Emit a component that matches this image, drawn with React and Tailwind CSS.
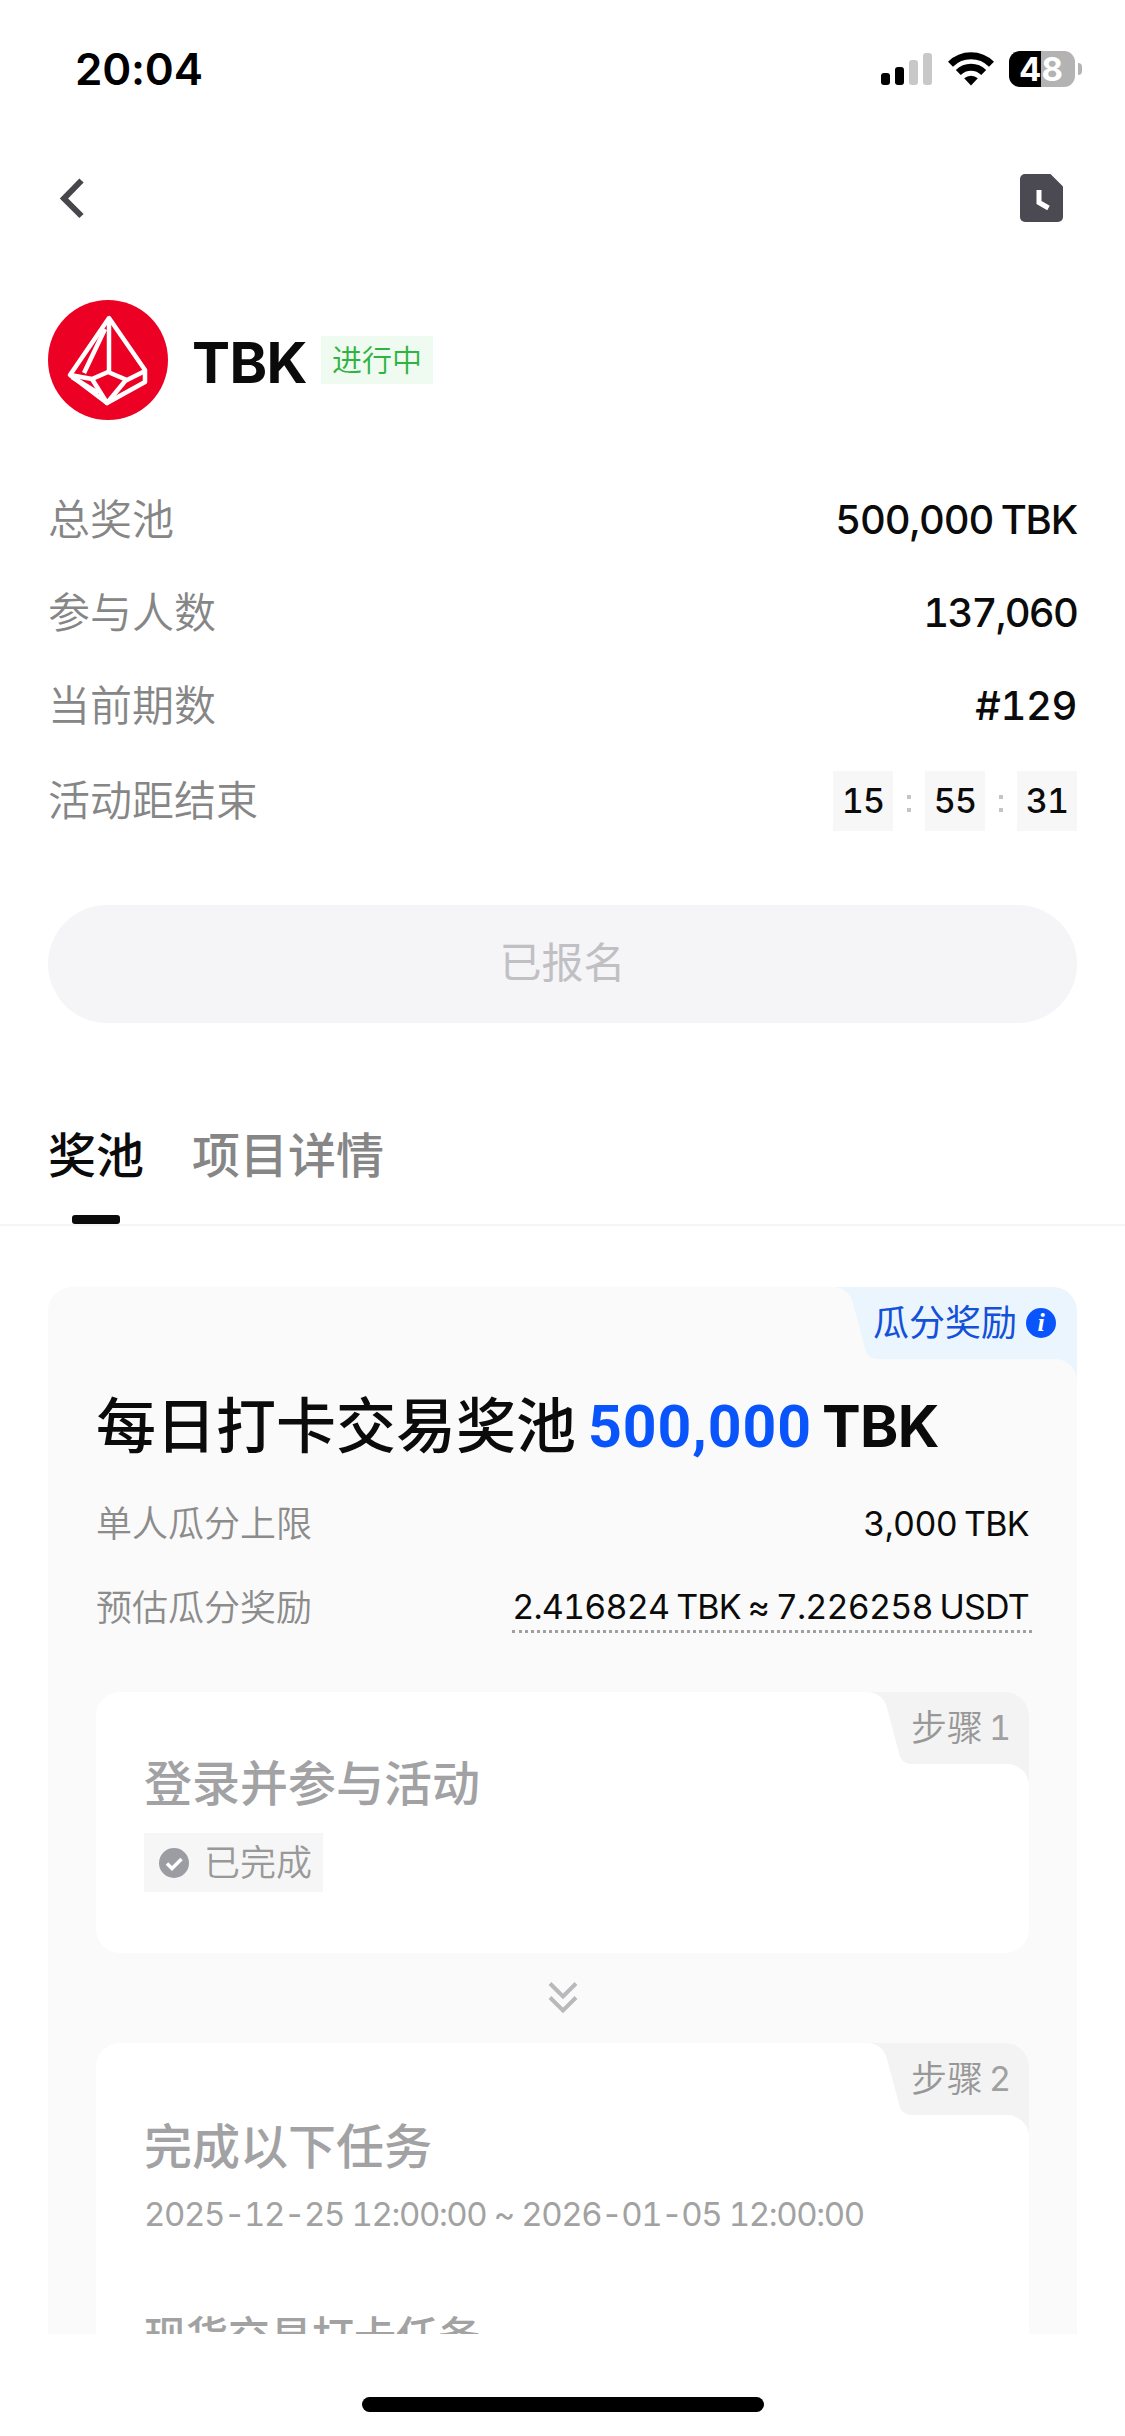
import React from "react";

// Rows shown under the token name
const infoRows = [
  { label: "总奖池", value: "500,000 TBK", spacing: "tracking-[-1.2px] [word-spacing:-2px]" },
  { label: "参与人数", value: "137,060", spacing: "tracking-[-1.8px]" },
  { label: "当前期数", value: "#129", spacing: "tracking-[-0.4px]" },
];

const countdown = ["15", "55", "31"];

// ---------------- STATUS BAR ----------------
function StatusBar() {
  return (
    <div className="flex h-[138px] items-center justify-between pl-[75px] pr-[43px] font-['Inter',sans-serif]">
      <span className="text-[44px] leading-none font-semibold text-black tracking-[-0.2px]">
        20:04
      </span>
      <div className="flex items-center gap-[15px]">
        {/* Signal */}
        <svg width="52" height="34" viewBox="0 0 52 34">
          <rect x="0" y="21" width="9" height="12" rx="3" fill="#000" />
          <rect x="14" y="15" width="9" height="18" rx="3" fill="#000" />
          <rect x="28" y="8" width="9" height="25" rx="3" fill="#c8c8c8" />
          <rect x="42" y="1" width="9" height="32" rx="3" fill="#c8c8c8" />
        </svg>
        {/* Wifi */}
        <svg width="46" height="34" viewBox="0 0 46 34">
          <g fill="none" stroke="#000" strokeWidth="7">
            <path d="M2.5 12.2a29 29 0 0 1 41 0" />
            <path d="M10.3 20.4a18 18 0 0 1 25.4 0" />
          </g>
          <path d="M23 33.5l-6.8-7.2a10 10 0 0 1 13.6 0z" fill="#000" />
        </svg>
        {/* Battery */}
        <div className="flex items-center gap-[3px]">
          <div className="flex h-9 w-[66px] items-center justify-center rounded-[11px] bg-linear-to-r from-black from-[49%] to-[#b3b3b3] to-[49%]">
            <span className="pr-[2px] text-[33px] leading-none font-bold text-white">
              48
            </span>
          </div>
          <div className="h-3 w-1 rounded-r-full bg-[#b3b3b3]" />
        </div>
      </div>
    </div>
  );
}

// ---------------- TOP NAVIGATION ----------------
function TopNav() {
  return (
    <div className="flex h-[120px] items-center justify-between pl-[56px] pr-[62px]">
      <svg width="28" height="44" viewBox="0 0 28 44" fill="none">
        <path d="M25.500 4.5L8 22.500l17.500 17.500" stroke="#47474b" strokeWidth="6" />
      </svg>
      <svg width="43" height="48" viewBox="0 0 43 48">
        <path
          d="M5 0h25.500L43 12.500V43a5 5 0 0 1-5 5H5a5 5 0 0 1-5-5V5a5 5 0 0 1 5-5z"
          fill="#4b4a53"
        />
        <path d="M19 16v12.500l9.500 5.500" fill="none" stroke="#fff" strokeWidth="5" />
      </svg>
    </div>
  );
}

// ---------------- TOKEN LOGO ----------------
function TokenLogo() {
  return (
    <svg width="120" height="120" viewBox="0 0 120 120">
      <circle cx="60" cy="60" r="60" fill="#ec0024" />
      <g fill="none" stroke="#fff" strokeWidth="4.500" strokeLinejoin="round">
        <path d="M61 18L22 75l37 28 38-21V70z" />
        <path d="M61 18v54" />
        <path d="M57 29L36 73" />
        <path d="M22 75l22 4 16-7 19 8 18-9" />
        <path d="M44 79l15 24 19-23" />
        <path d="M24 77l26 16" />
      </g>
    </svg>
  );
}

// Slanted corner label used on the cards
function CornerTab({ width, fill, children }) {
  return (
    <div className="absolute top-0 right-0 h-[92px]">
      <svg width={width} height="92" viewBox={`0 0 ${width} 92`}>
        <path
          d={`M0 0H${width - 24}a24 24 0 0 1 24 24V92a22 22 0 0 0-22-20H45c-7 0-12-4-13-11L20 16C18 7 11 0 0 0z`}
          fill={fill}
        />
      </svg>
      <div className="absolute inset-x-0 top-0 flex h-[72px] items-center">
        {children}
      </div>
    </div>
  );
}

function StepCard({ step, title, className, children }) {
  return (
    <div className={`relative rounded-[24px] bg-white px-12 ${className}`}>
      <CornerTab width={162} fill="#f3f3f3">
        <span className="ml-[44px] text-[36px] leading-none font-[350] text-[#989898]">
          步骤
        </span>
        <span className="ml-[6px] text-[34px] leading-none tabular-nums text-[#a0a0a0]">
          {step}
        </span>
      </CornerTab>
      <h3 className="text-[48px] leading-[60px] font-medium text-[#a2a2a4]">
        {title}
      </h3>
      {children}
    </div>
  );
}

function App() {
  return (
    <div className="flex h-[2436px] w-[1125px] flex-col overflow-hidden bg-white font-['Inter','Noto_Sans_CJK_SC',sans-serif] text-[#0b0b0b]">
      <StatusBar />
      <TopNav />

      {/* ---------------- TOKEN HEADER ---------------- */}
      <div className="mt-[42px] flex h-[120px] items-center px-12">
        <TokenLogo />
        <h1 className="ml-[24px] pt-[4px] text-[57px] leading-none font-bold tracking-[-0.6px]">
          TBK
        </h1>
        <span className="ml-[14px] flex h-12 items-center bg-[#effaf0] px-[11px] text-[30px] leading-none font-[350] text-[#2fb342]">
          进行中
        </span>
      </div>

      {/* ---------------- INFO ROWS ---------------- */}
      <div className="mt-[53px] px-12 text-[42px] leading-none">
        {infoRows.map((row) => (
          <div key={row.label} className="flex h-[93px] items-center justify-between">
            <span className="font-[350] text-[#868686]">{row.label}</span>
            <span className={`text-[40px] font-medium tabular-nums ${row.spacing}`}>
              {row.value}
            </span>
          </div>
        ))}
        <div className="flex h-[98px] items-center justify-between">
          <span className="font-[350] text-[#868686]">活动距结束</span>
          <div className="flex items-center">
            {countdown.map((part, i) => (
              <React.Fragment key={part}>
                {i > 0 && (
                  <div className="flex w-8 flex-col items-center gap-[9px] pt-[4px]">
                    <span className="size-1 bg-[#c4c4c4]" />
                    <span className="size-1 bg-[#c4c4c4]" />
                  </div>
                )}
                <span className="flex size-[60px] items-center justify-center bg-[#f7f7f7] text-[34px] font-medium tabular-nums tracking-[-0.8px]">
                  {part}
                </span>
              </React.Fragment>
            ))}
          </div>
        </div>
      </div>

      {/* ---------------- SIGN UP BUTTON ---------------- */}
      <button className="mx-12 mt-[55px] h-[118px] shrink-0 rounded-full bg-[#f5f5f7] pb-[2px] text-[42px] leading-none text-[#c0c0c4]">
        已报名
      </button>

      {/* ---------------- TABS ---------------- */}
      <div className="mt-[97px] flex h-[106px] shrink-0 gap-12 border-b-2 border-[#f5f5f5] px-12 text-[48px] leading-[72px] font-medium">
        <div className="flex flex-col items-center justify-between">
          <span>奖池</span>
          <span className="h-[9px] w-12 rounded-[3px] bg-[#0b0b0b]" />
        </div>
        <span className="text-[#868686]">项目详情</span>
      </div>

      {/* ---------------- PRIZE POOL CARD ---------------- */}
      <div className="relative mx-12 mt-[61px] h-[1047px] shrink-0 overflow-hidden rounded-t-[24px] bg-[#fafafa] px-12">
        <CornerTab width={244} fill="#eaf5fe">
          <span className="ml-[40px] text-[36px] leading-none text-[#1450d8]">
            瓜分奖励
          </span>
          <span className="ml-[9px] flex size-[30px] items-center justify-center rounded-full bg-[#0a55fb] font-['Liberation_Serif',serif] text-[26px] leading-none font-bold text-white italic">
            i
          </span>
        </CornerTab>

        <h2 className="mt-[99px] flex h-[80px] items-center text-[60px] leading-none font-medium">
          每日打卡交易奖池
          <span className="ml-[12px] font-['Roboto',sans-serif] text-[59px] font-bold tracking-[0.9px] text-[#0a55fb]">
            500,000
          </span>
          <span className="ml-[10px] text-[58px] font-bold tracking-[-0.6px]">TBK</span>
        </h2>

        <div className="mt-[16px] flex h-[84px] items-center justify-between text-[36px] leading-none">
          <span className="font-[350] text-[#8c8c8c]">单人瓜分上限</span>
          <span className="text-[34px] tabular-nums tracking-[-0.7px] [word-spacing:-1.5px]">
            3,000 TBK
          </span>
        </div>
        <div className="flex h-[84px] items-center justify-between text-[36px] leading-none">
          <span className="font-[350] text-[#8c8c8c]">预估瓜分奖励</span>
          <span className="-mr-[3px] border-b-3 border-dotted border-[#a0a0a0] pr-[3px] text-[34px] leading-[46px] tabular-nums tracking-[-0.8px] [word-spacing:-1.5px]">
            2.416824 TBK ≈ 7.226258 USDT
          </span>
        </div>

        {/* Step 1 */}
        <StepCard step="1" title="登录并参与活动" className="mt-[42px] h-[261px] pt-[62px]">
          <div className="mt-[19px] flex h-[59px] w-[179px] items-center bg-[#f6f6f6] pl-[15px]">
            <svg width="30" height="30" viewBox="0 0 30 30">
              <circle cx="15" cy="15" r="15" fill="#9c9ca3" />
              <path d="M8 15.500l5 5L22.500 11" fill="none" stroke="#fff" strokeWidth="3.500" />
            </svg>
            <span className="ml-[15px] text-[36px] leading-none font-[350] text-[#999]">
              已完成
            </span>
          </div>
        </StepCard>

        <div className="flex h-[90px] items-center justify-center">
          <svg width="30" height="34" viewBox="0 0 30 34" fill="none" stroke="#b9b9bb" strokeWidth="4">
            <path d="M2 2.500l13 13 13-13" />
            <path d="M2 16.500l13 13 13-13" />
          </svg>
        </div>

        {/* Step 2, continues below the fold */}
        <StepCard step="2" title="完成以下任务" className="h-[400px] pt-[74px]">
          <p className="mt-[13px] text-[33px] leading-[48px] whitespace-nowrap tabular-nums tracking-[-1.4px] text-[#a2a2a2]">
            2025-12-25 12:00:00 ~ 2026-01-05 12:00:00
          </p>
          <p className="mt-[69px] text-[42px] leading-[60px] font-medium text-[#a2a2a2]">
            现货交易打卡任务
          </p>
        </StepCard>
      </div>

      {/* Home indicator */}
      <div className="mx-auto mt-[63px] h-[15px] w-[402px] shrink-0 rounded-full bg-black" />
    </div>
  );
}

export default App;
